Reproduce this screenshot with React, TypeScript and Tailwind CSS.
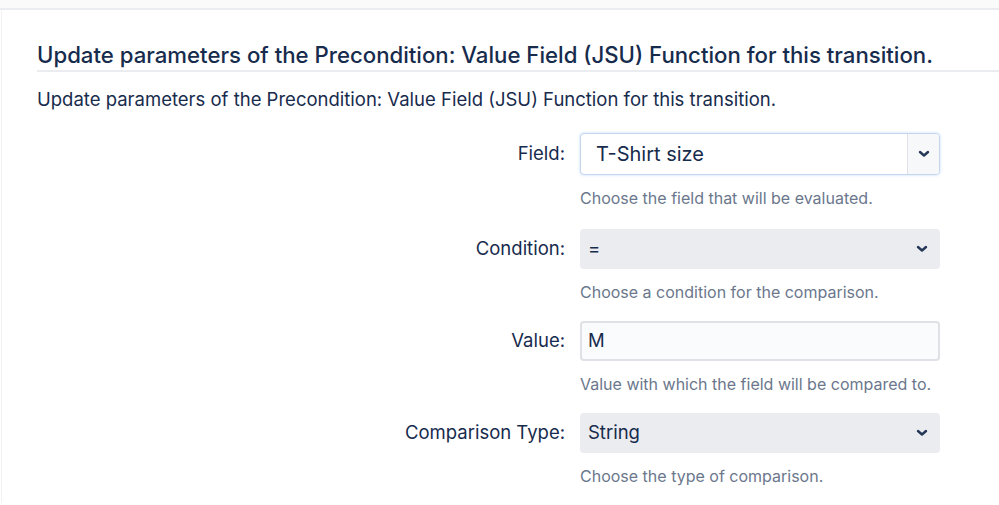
import React from "react";

const Chevron = () => (
  <svg width="12" height="8" viewBox="0 0 12 8" fill="none">
    <path d="M2 2l4 3.5L10 2" stroke="#253858" strokeWidth="2.4" strokeLinecap="round" strokeLinejoin="round" />
  </svg>
);

function Row({ label, children, help, extra }: { label: string; children: React.ReactNode; help: string; extra?: boolean }) {
  return (
    <div className={`grid grid-cols-[528px_360px] gap-x-[15px] ${extra ? "mb-[2px]" : ""}`}>
      <div className="flex h-[40px] items-center justify-end text-[18.5px] text-[#172b4d]">{label}</div>
      <div>
        {children}
        <div className="mt-[12px] text-[16px] leading-[22px] text-[#6b778c]">{help}</div>
      </div>
    </div>
  );
}

export default function App() {
  return (
    <div className="h-[505px] w-[999px] overflow-hidden bg-white" style={{ fontFamily: "Inter, 'Noto Sans', sans-serif" }}>
      <div className="h-[10px] border-b-2 border-[#ebecf0] bg-[#fafafa]" />
      <div className="ml-[1px] h-[493px] border-l border-[#f2f2f2] pl-[35px] pt-[30px]">
        <h2 className="border-b-2 border-[#ebecf0] text-[22.2px] font-medium leading-[30px] text-[#172b4d]">
          Update parameters of the Precondition: Value Field (JSU) Function for this transition.
        </h2>
        <p className="mt-[14px] text-[18.5px] leading-[26px] text-[#172b4d]">
          Update parameters of the Precondition: Value Field (JSU) Function for this transition.
        </p>
        <div className="mt-[22px] flex flex-col gap-[18px]">
          <Row label="Field:" help="Choose the field that will be evaluated." extra>
            <div className="-mt-[1px] flex h-[42px] overflow-hidden rounded-[4px] border border-[#c5d6ee] bg-white shadow-[0_0_3px_rgba(76,154,255,0.35)]">
              <div className="flex flex-1 items-center pl-[15px] text-[20px] text-[#172b4d]">T-Shirt size</div>
              <div className="flex w-[32px] items-center justify-center border-l border-[#dfe1e6] bg-[#f7f8f9]">
                <Chevron />
              </div>
            </div>
          </Row>
          <Row label="Condition:" help="Choose a condition for the comparison.">
            <div className="flex h-[40px] items-center justify-between rounded-[4px] bg-[#ebecf0] pl-[8px] pr-[12px] text-[18.5px] text-[#172b4d]">
              <span>=</span>
              <Chevron />
            </div>
          </Row>
          <Row label="Value:" help="Value with which the field will be compared to.">
            <div className="flex h-[40px] items-center rounded-[4px] border-2 border-[#dfe1e6] bg-[#fafbfc] pl-[6px] text-[18.5px] text-[#172b4d]">
              M
            </div>
          </Row>
          <Row label="Comparison Type:" help="Choose the type of comparison.">
            <div className="flex h-[40px] items-center justify-between rounded-[4px] bg-[#ebecf0] pl-[8px] pr-[12px] text-[18.5px] text-[#172b4d]">
              <span>String</span>
              <Chevron />
            </div>
          </Row>
        </div>
      </div>
    </div>
  );
}
